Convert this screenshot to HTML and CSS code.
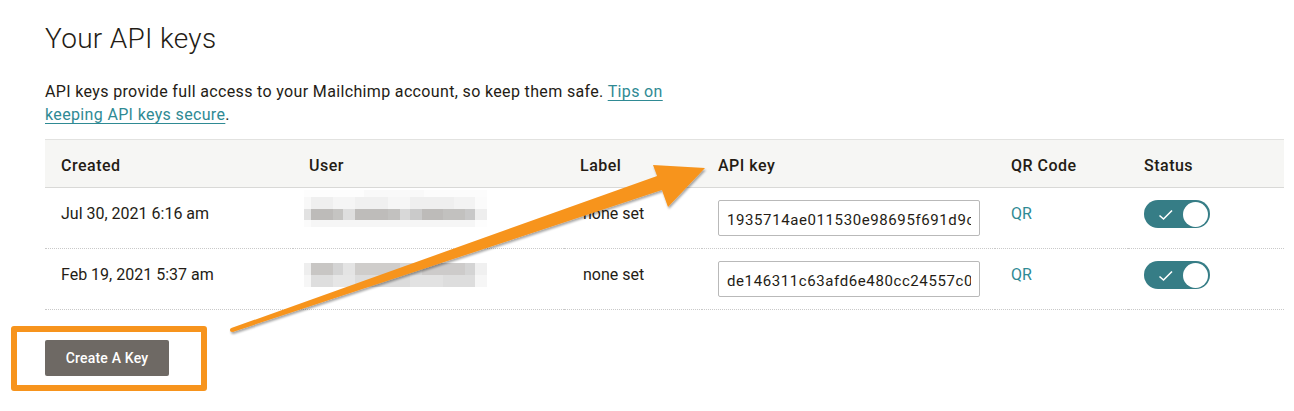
FILE: index.html
```html
<!DOCTYPE html>
<html lang="en">
<head>
  <meta charset="UTF-8">
  <meta name="viewport" content="width=device-width, initial-scale=1.0">
  <title>API keys</title>
  <link rel="stylesheet" href="styles.css">
</head>
<body>
  <div class="container">
    <h1>Your API keys</h1>
    <p class="intro">API keys provide full access to your Mailchimp account, so keep them safe. <a href="#">Tips on keeping API keys secure</a>.</p>

    <table class="keys">
      <colgroup>
        <col class="c-created">
        <col class="c-user">
        <col class="c-label">
        <col class="c-key">
        <col class="c-qr">
        <col class="c-status">
      </colgroup>
      <thead>
        <tr>
          <th>Created</th>
          <th>User</th>
          <th>Label</th>
          <th>API key</th>
          <th>QR Code</th>
          <th>Status</th>
        </tr>
      </thead>
      <tbody>
        <tr>
          <td>Jul 30, 2021 6:16 am</td>
          <td>
            <!-- blurred user name -->
            <div class="blur blur-1">
              <div class="b-top"></div>
              <div class="b-mid"></div>
              <div class="b-dark"></div>
              <div class="b-low"></div>
            </div>
          </td>
          <td class="label">none set</td>
          <td><input type="text" class="key" value="1935714ae011530e98695f691d9c3a77-us6" readonly></td>
          <td><a href="#" class="qr">QR</a></td>
          <td>
            <span class="toggle">
              <svg width="16" height="12" viewBox="0 0 16 12"><path d="M1.5 6.5 L5.5 10 L14 1.5" fill="none" stroke="#fff" stroke-width="1.6"/></svg>
            </span>
          </td>
        </tr>
        <tr>
          <td>Feb 19, 2021 5:37 am</td>
          <td>
            <div class="blur blur-2">
              <div class="b-dark2"></div>
              <div class="b-light2"></div>
            </div>
          </td>
          <td class="label">none set</td>
          <td><input type="text" class="key" value="de146311c63afd6e480cc24557c0f1d2-us6" readonly></td>
          <td><a href="#" class="qr">QR</a></td>
          <td>
            <span class="toggle">
              <svg width="16" height="12" viewBox="0 0 16 12"><path d="M1.5 6.5 L5.5 10 L14 1.5" fill="none" stroke="#fff" stroke-width="1.6"/></svg>
            </span>
          </td>
        </tr>
      </tbody>
    </table>

    <button class="create">Create A Key</button>
  </div>

  <!-- annotation: highlight box and arrow -->
  <div class="highlight"></div>
  <svg class="arrow" width="1294" height="411" viewBox="0 0 1294 411">
    <defs>
      <filter id="shadow" x="-10%" y="-10%" width="120%" height="130%">
        <feDropShadow dx="1" dy="2" stdDeviation="1.2" flood-color="#000" flood-opacity="0.35"/>
      </filter>
    </defs>
    <g fill="#f7941d" filter="url(#shadow)">
      <polygon points="231.3,328.1 657.1,175.9 653,165 705,168 668,207 661.9,190.1 232.7,331.9"/>
      <circle cx="232" cy="330" r="2.1"/>
    </g>
  </svg>
</body>
</html>
```

FILE: styles.css
```css
body {
  margin: 0;
  padding: 0;
  font-family: Roboto, "Liberation Sans", sans-serif;
  color: #241c15;
  background: #fff;
  position: relative;
  overflow: hidden;
  height: 411px;
}

.container {
  padding: 22px 10px 0 45px;
}

h1 {
  font-size: 28px;
  line-height: 34px;
  font-weight: 300;
  letter-spacing: 0.3px;
  margin: 0 0 24px;
}

.intro {
  font-size: 16px;
  line-height: 23px;
  letter-spacing: 0.35px;
  margin: 0 0 13px;
  max-width: 640px;
}

.intro a {
  color: #2f8a94;
  text-decoration: underline;
  text-underline-offset: 3px;
  text-decoration-thickness: 1px;
}

.keys {
  width: 1239px;
  table-layout: fixed;
  border-collapse: collapse;
  font-size: 16px;
}

.c-created { width: 248px; }
.c-user { width: 271px; }
.c-label { width: 138px; }
.c-key { width: 293px; }
.c-qr { width: 133px; }
.c-status { width: 156px; }

.keys th {
  background: #f6f6f4;
  border-top: 1px solid #e2e2e0;
  border-bottom: 1px solid #d9d9d7;
  text-align: left;
  font-weight: 500;
  letter-spacing: 0.5px;
  height: 44px;
  padding: 3px 16px 0;
  line-height: 23px;
}

.keys td {
  vertical-align: top;
  padding: 14px 16px 0;
  line-height: 23px;
  height: 46px;
  border-bottom: 1px dotted #c9c9c9;
  white-space: nowrap;
}

.keys td.label {
  padding-left: 19px;
}

.key {
  display: block;
  box-sizing: border-box;
  width: 262px;
  height: 36px;
  margin-top: -2px;
  border: 1px solid #b9b9b9;
  border-radius: 2px;
  padding: 3px 8px 0;
  font-family: Roboto, "Liberation Sans", sans-serif;
  font-size: 15px;
  letter-spacing: 0.6px;
  color: #241c15;
  background: #fff;
  outline: none;
}

.qr {
  color: #2f8a94;
  text-decoration: none;
}

.toggle {
  position: relative;
  display: block;
  margin-top: -2px;
  width: 66px;
  height: 28px;
  border-radius: 14px;
  background: #367d86;
}

.toggle svg {
  position: absolute;
  left: 14px;
  top: 9px;
}

.toggle::after {
  content: "";
  position: absolute;
  right: 2px;
  top: 1.5px;
  width: 25px;
  height: 25px;
  border-radius: 50%;
  background: #fff;
}

/* pixelated name */
.blur {
  width: 183px;
  margin-left: -5px;
}

.blur-1 {
  margin-top: -12px;
}

.blur-2 {
  margin-top: 0;
}

.b-top {
  height: 7px;
  background: linear-gradient(to right, #fdfdfd 0 60px, #f9f9f9 60px 120px, #fcfcfc 120px 183px);
}

.b-mid {
  height: 12px;
  background: linear-gradient(to right, #f8f8f8 0 7px, #efefef 7px 29px, #f5f5f5 29px 51px, #f0f0f0 51px 84px, #f6f6f6 84px 106px, #efefef 106px 150px, #f3f3f3 150px 171px, #fbfbfb 171px 183px);
}

.b-dark {
  height: 11px;
  background: linear-gradient(to right, #e2e2e2 0 7px, #bdbbb9 7px 29px, #c5c4c2 29px 39px, #dedede 39px 51px, #bebcba 51px 84px, #c2c1bf 84px 96px, #d8d8d8 96px 106px, #cacaca 106px 118px, #bdbbb9 118px 139px, #c2c1bf 139px 161px, #c8c8c8 161px 171px, #eeeeee 171px 183px);
}

.b-low {
  height: 7px;
  background: linear-gradient(to right, #fbfbfb 0 7px, #f6f6f6 7px 171px, #fdfdfd 171px 183px);
}

.b-dark2 {
  height: 12px;
  background: linear-gradient(to right, #eeeeee 0 7px, #c8c6c4 7px 29px, #d4d4d4 29px 39px, #e4e4e4 39px 51px, #cfcdcb 51px 96px, #d6d6d6 96px 118px, #cdcbca 118px 161px, #d4d4d4 161px 171px, #f0f0f0 171px 183px);
}

.b-light2 {
  height: 12px;
  background: linear-gradient(to right, #f6f6f6 0 7px, #dedede 7px 29px, #e6e6e6 29px 51px, #dcdcdc 51px 106px, #e2e2e2 106px 139px, #dddddd 139px 171px, #f6f6f6 171px 183px);
}

.create {
  margin-top: 30px;
  width: 124px;
  height: 36px;
  border: none;
  border-radius: 2px;
  background: #6e6964;
  color: #fff;
  font-family: Roboto, "Liberation Sans", sans-serif;
  font-size: 14px;
  font-weight: 500;
  letter-spacing: 0.2px;
}

.highlight {
  position: absolute;
  left: 11px;
  top: 326px;
  width: 184px;
  height: 53px;
  border: 6px solid #f7941d;
  border-radius: 3px;
}

.arrow {
  position: absolute;
  left: 0;
  top: 0;
  pointer-events: none;
}
```
